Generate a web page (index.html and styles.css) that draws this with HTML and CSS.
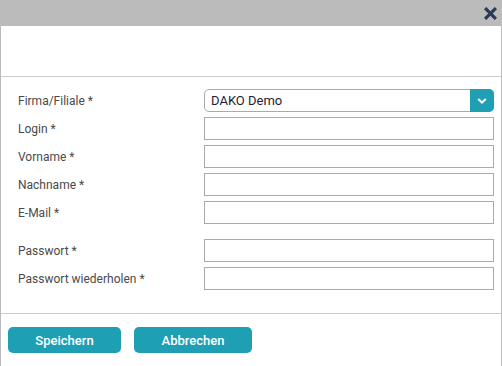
FILE: index.html
```html
<!DOCTYPE html>
<html lang="de">
<head>
    <meta charset="UTF-8">
    <title>Benutzer anlegen</title>
    <link rel="stylesheet" href="styles.css">
</head>
<body>
<div class="dialog">
    <div class="titlebar">
        <button class="close" title="Schließen">
            <svg width="13" height="13" viewBox="0 0 13 13">
                <path d="M2.2 2.2 L10.8 10.8 M10.8 2.2 L2.2 10.8" stroke="#2d3a57" stroke-width="3.2" stroke-linecap="square"/>
            </svg>
        </button>
    </div>
    <div class="dialog-head"></div>
    <form class="user-form">
        <div class="form-row">
            <label for="firma">Firma/Filiale *</label>
            <div class="select" id="firma">
                <span class="select-value">DAKO Demo</span>
                <span class="select-btn">
                    <svg width="10" height="6" viewBox="0 0 10 6">
                        <path d="M1.2 1 L5 4.6 L8.8 1" fill="none" stroke="#fff" stroke-width="2"/>
                    </svg>
                </span>
            </div>
        </div>
        <div class="form-row">
            <label for="login">Login *</label>
            <input type="text" id="login">
        </div>
        <div class="form-row">
            <label for="vorname">Vorname *</label>
            <input type="text" id="vorname">
        </div>
        <div class="form-row">
            <label for="nachname">Nachname *</label>
            <input type="text" id="nachname">
        </div>
        <div class="form-row">
            <label for="email">E-Mail *</label>
            <input type="text" id="email">
        </div>
        <div class="form-row spaced">
            <label for="passwort">Passwort *</label>
            <input type="password" id="passwort">
        </div>
        <div class="form-row">
            <label for="passwort2">Passwort wiederholen *</label>
            <input type="password" id="passwort2">
        </div>
    </form>
    <div class="dialog-footer">
        <button class="btn btn-save">Speichern</button>
        <button class="btn btn-cancel">Abbrechen</button>
    </div>
</div>
</body>
</html>
```

FILE: styles.css
```css
body {
    font-family: Roboto, "Liberation Sans", sans-serif;
    font-size: 12px;
    margin: 0;
    padding: 0;
}

.dialog {
    border-left: 1px solid #bbb;
    border-right: 1px solid #bbb;
    height: 100vh;
    box-sizing: border-box;
}

.titlebar {
    background-color: #bbb;
    height: 26px;
    display: flex;
    justify-content: flex-end;
    align-items: center;
    padding-right: 5px;
    margin: 0 -1px;
}

.close {
    background: none;
    border: none;
    padding: 0;
    width: 13px;
    height: 13px;
    display: flex;
    cursor: pointer;
    margin-top: 1px;
}

.dialog-head {
    height: 50px;
    border-bottom: 1px solid #ccc;
}

.user-form {
    padding: 12px 7px 23px 17px;
    display: flex;
    flex-direction: column;
    gap: 5px;
}

.form-row {
    display: flex;
    align-items: center;
    height: 23px;
}

.form-row.spaced {
    margin-top: 10px;
}

.form-row label {
    width: 186px;
    color: #4a4a4a;
}

.form-row input {
    width: 290px;
    height: 23px;
    box-sizing: border-box;
    border: 1px solid #aaa;
    margin: 0;
    padding: 0 6px;
    font: inherit;
}

.select {
    width: 290px;
    height: 23px;
    box-sizing: border-box;
    border: 1px solid #aaa;
    border-radius: 5px;
    display: flex;
    align-items: center;
}

.select-value {
    flex: 1;
    padding-left: 6px;
    font-size: 13px;
    color: #1e1e32;
}

.select-btn {
    width: 24px;
    height: 23px;
    margin-right: -1px;
    background-color: #1f9fb4;
    border-radius: 0 5px 5px 0;
    display: flex;
    align-items: center;
    justify-content: center;
}

.dialog-footer {
    border-top: 1px solid #ccc;
    padding: 13px 7px;
    display: flex;
    gap: 13px;
}

.btn {
    background-color: #1f9fb4;
    color: white;
    border: none;
    border-radius: 5px;
    height: 26px;
    font-family: Roboto, "Liberation Sans", sans-serif;
    font-size: 13px;
    font-weight: 500;
    cursor: pointer;
}

.btn-save {
    width: 113px;
}

.btn-cancel {
    width: 118px;
}
```
